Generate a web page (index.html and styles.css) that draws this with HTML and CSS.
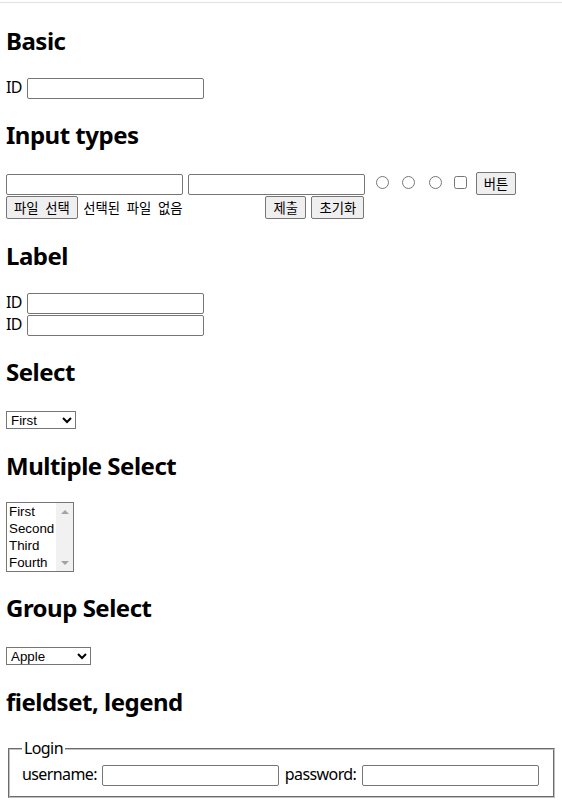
FILE: index.html
```html
<!DOCTYPE html>
<html lang="ko">
<head>
<meta charset="utf-8">
<title>Form elements</title>
<link rel="stylesheet" href="styles.css">
</head>
<body>
<h2>Basic</h2>
<form class="row">
  <label class="lbl" for="basic-id">ID</label>
  <input id="basic-id" class="text" type="text">
</form>

<h2>Input types</h2>
<form class="row types">
  <input class="text" type="text">
  <input class="text" type="password">
  <input type="radio" name="r">
  <input type="radio" name="r">
  <input type="radio" name="r">
  <input type="checkbox">
  <button type="button" class="btn">버튼</button>
  <span class="file"><button type="button" class="btn">파일 선택</button> <span class="file-name">선택된 파일 없음</span></span>
  <button type="submit" class="btn">제출</button>
  <button type="reset" class="btn">초기화</button>
</form>

<h2>Label</h2>
<form class="row labels">
  <label class="lbl" for="l1">ID</label>
  <input id="l1" class="text" type="text"><br>
  <label class="lbl">ID <input class="text" type="text"></label>
</form>

<h2>Select</h2>
<form class="row tall">
  <select class="sel sel-one">
    <option>First</option>
    <option>Second</option>
    <option>Third</option>
  </select>
</form>

<h2>Multiple Select</h2>
<form class="row">
  <div class="listbox" role="listbox" aria-multiselectable="true">
    <ul class="options">
      <li role="option">First</li>
      <li role="option">Second</li>
      <li role="option">Third</li>
      <li role="option">Fourth</li>
    </ul>
    <div class="scrollbar">
      <span class="sb-btn"><span class="arrow up"></span></span>
      <span class="sb-btn"><span class="arrow down"></span></span>
    </div>
  </div>
</form>

<h2>Group Select</h2>
<form class="row tall">
  <select class="sel sel-group">
    <optgroup label="Fruits">
      <option>Apple</option>
      <option>Banana</option>
    </optgroup>
    <optgroup label="Vegetables">
      <option>Carrot</option>
    </optgroup>
  </select>
</form>

<h2>fieldset, legend</h2>
<form>
  <fieldset class="login">
    <legend class="lbl">Login</legend>
    <label class="lbl">username: <input class="text" type="text"></label>
    <label class="lbl">password: <input class="text" type="password"></label>
  </fieldset>
</form>
</body>
</html>
```

FILE: styles.css
```css
html {
  background: linear-gradient(#ffffff 2px, #e2e2e2 2px, #e2e2e2 3px, #ffffff 3px) no-repeat;
}
body {
  margin: 0 5px 8px 6px;
  padding-top: 5px;
  font-family: "Noto Sans", "Noto Sans CJK KR", sans-serif;
  font-size: 16px;
  line-height: 21px;
  color: #000;
  word-spacing: 1.3px;
}
h2 {
  font-size: 24px;
  font-weight: bold;
  line-height: 32px;
  letter-spacing: -0.5px;
  word-spacing: 0;
  margin: 20px 0;
}
.row {
  margin: 0;
}
.types {
  line-height: 24px;
}
.labels {
  line-height: 21.5px;
}
.tall {
  line-height: 22px;
}
.lbl {
  letter-spacing: -0.6px;
  word-spacing: 1.9px;
}
.text {
  box-sizing: border-box;
  width: 177px;
  height: 21px;
  border: 1px solid #767676;
  border-radius: 2px;
  padding: 1px 2px;
  font: 13.33px "Liberation Sans", Arial, sans-serif;
  letter-spacing: 0;
  word-spacing: 0;
  background: #fff;
}
.btn {
  font: 13.33px "Noto Sans CJK KR", "Noto Sans", sans-serif;
  line-height: 19px;
  word-spacing: 3px;
  padding: 1px 7px;
  margin: 0;
  border: 1px solid #767676;
  border-radius: 2px;
  background: #efefef;
  color: #000;
}
.file {
  display: inline-block;
  width: 254px;
  font-size: 13.33px;
  word-spacing: 2px;
}
.file-name {
  font-family: "Noto Sans CJK KR", sans-serif;
  word-spacing: 3px;
}
.sel {
  font: 13.33px "Liberation Sans", Arial, sans-serif;
  height: 18px;
  border: 1px solid #767676;
  border-radius: 0;
  background: #fff;
  color: #000;
}
.sel-one { width: 70px; }
.sel-group { width: 85px; }

.listbox {
  display: flex;
  box-sizing: border-box;
  width: 68px;
  height: 70px;
  border: 1px solid #767676;
  background: #fff;
}
.options {
  flex: 1;
  margin: 0;
  padding: 0;
  list-style: none;
  font: 13.33px "Liberation Sans", Arial, sans-serif;
  line-height: 17px;
  word-spacing: 0;
}
.options li {
  padding: 0 2px;
  white-space: nowrap;
}
.scrollbar {
  width: 17px;
  background: #f1f1f1;
  display: flex;
  flex-direction: column;
  justify-content: space-between;
}
.sb-btn {
  height: 17px;
  display: flex;
  align-items: center;
  justify-content: center;
}
.arrow {
  width: 0;
  height: 0;
  border-left: 4px solid transparent;
  border-right: 4px solid transparent;
}
.arrow.up {
  border-bottom: 4px solid #a3a3a3;
}
.arrow.down {
  border-top: 4px solid #a3a3a3;
}

.login {
  margin: 0 2px;
  border: 2px groove #c0c0c0;
  padding: 5px 12px 10px;
}
.login legend {
  padding: 0 2px;
}
```
